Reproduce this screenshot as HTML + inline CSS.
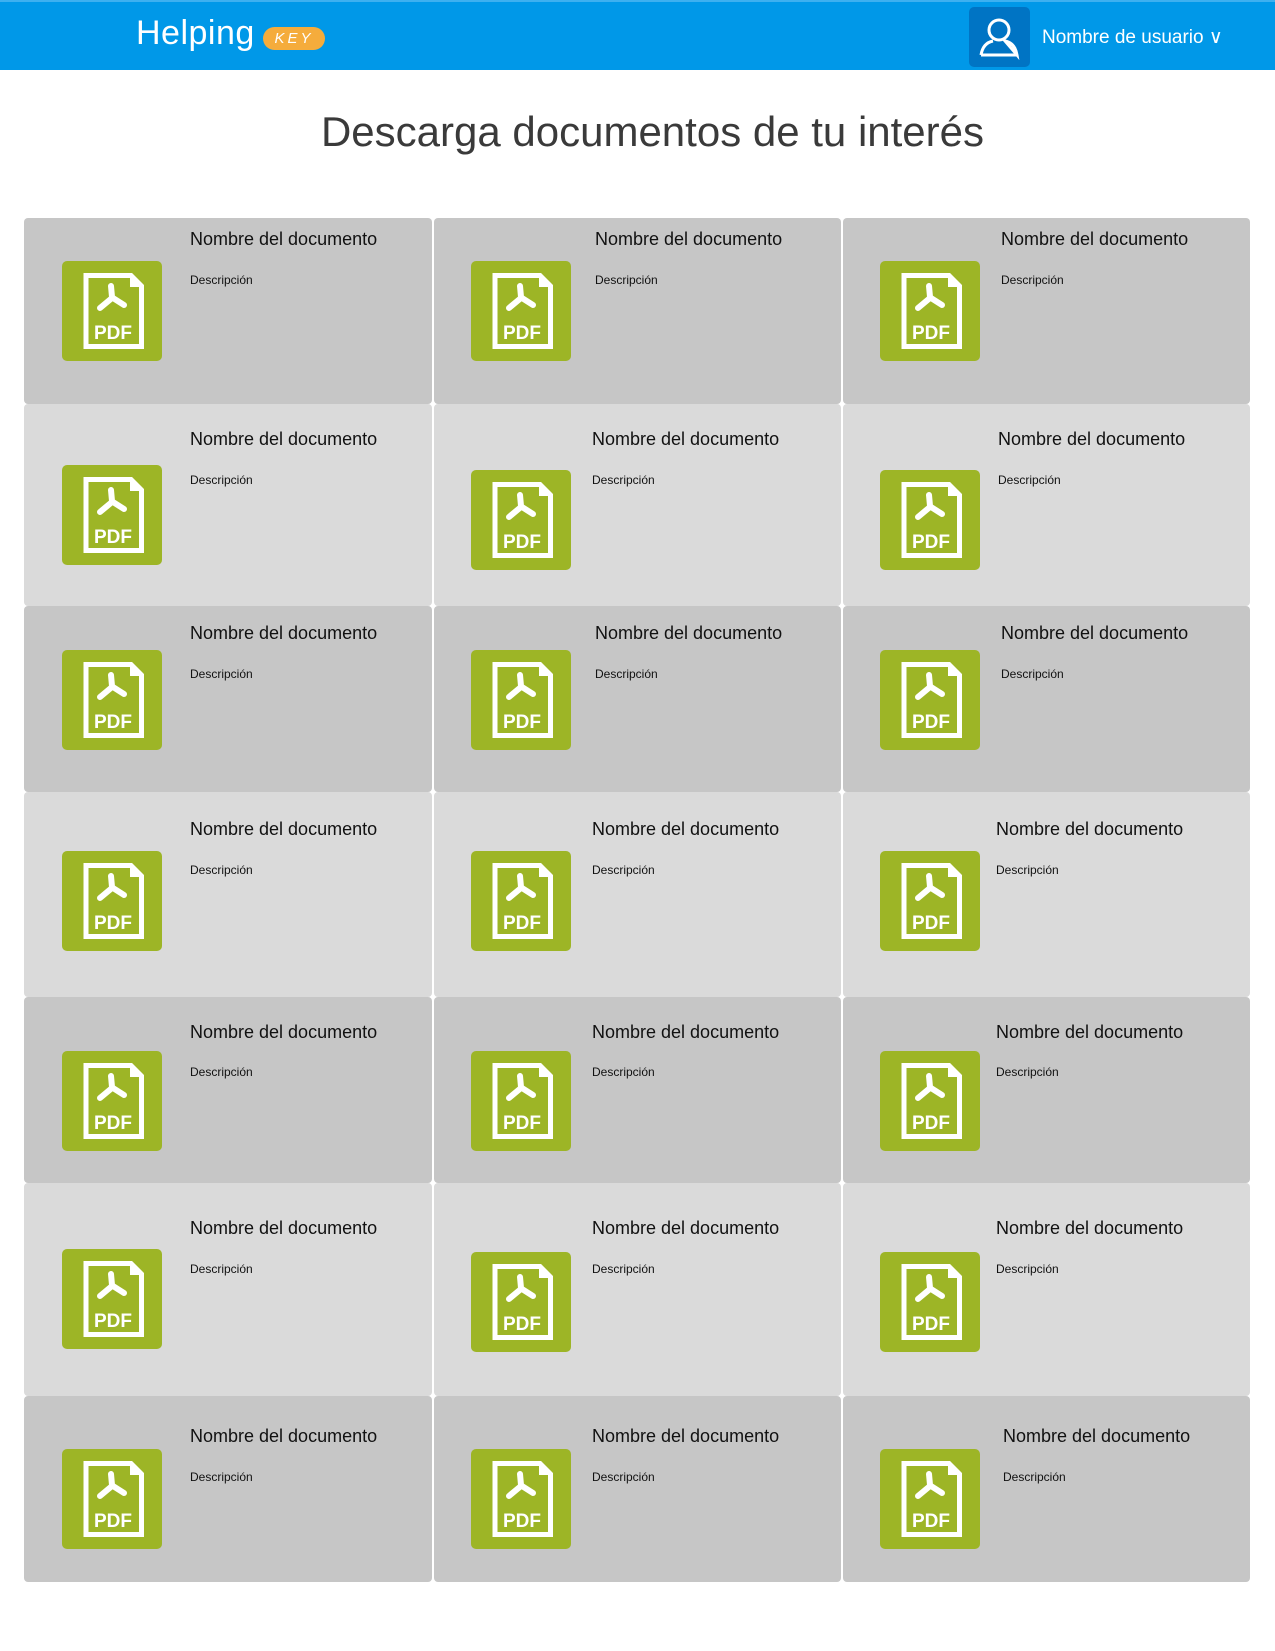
<!DOCTYPE html>
<html><head><meta charset="utf-8"><style>
*{margin:0;padding:0;box-sizing:border-box}
body{width:1275px;height:1651px;background:#fff;position:relative;font-family:"Liberation Sans",sans-serif;overflow:hidden}
.hdr{position:absolute;left:0;top:0;width:1275px;height:70px;background:#0098e8;border-top:2px solid #3db0f0}
.logo{position:absolute;left:136px;top:12px;color:#fff;font-size:34px;font-weight:normal;letter-spacing:0.5px}
.key{position:absolute;left:263px;top:25px;width:62px;height:23px;border-radius:12px;background:#f5ac3c;color:#fff;font-size:15px;text-align:center;line-height:23px;letter-spacing:3px;font-style:italic}
.ubox{position:absolute;left:969px;top:5px;width:61px;height:60px;border-radius:5px;background:#0074c4}
.uname{position:absolute;left:1042px;top:24px;color:#fff;font-size:19px}
h1{position:absolute;left:0;width:1305px;top:108px;text-align:center;font-weight:normal;font-size:42px;color:#3a3a3a}
.c{position:absolute;border-radius:4px}
.d{background:#c6c6c6}.l{background:#dadada}
.n{position:absolute;font-size:18px;color:#111;white-space:nowrap;line-height:20px}
.s{position:absolute;font-size:12px;color:#111;white-space:nowrap;line-height:14px}
svg.i{position:absolute;width:100px;height:100px}
</style></head><body>
<div class="hdr">
 <div class="logo">Helping</div>
 <div class="key">KEY</div>
 <div class="ubox"><svg width="61" height="60" viewBox="0 0 61 60"><circle cx="30" cy="23" r="10" fill="none" stroke="#fff" stroke-width="3"/><path d="M12 48 Q14 36 24 34 M36 34 Q46 36 48 48 Z M12 48 H48" fill="none" stroke="#fff" stroke-width="3"/></svg></div>
 <div class="uname">Nombre de usuario ∨</div>
</div>
<h1>Descarga documentos de tu interés</h1>

<div class="c d" style="left:24px;top:218px;width:408px;height:186px"></div>
<div class="c d" style="left:434px;top:218px;width:407px;height:186px"></div>
<div class="c d" style="left:843px;top:218px;width:407px;height:186px"></div>
<div class="c l" style="left:24px;top:404px;width:408px;height:202px"></div>
<div class="c l" style="left:434px;top:404px;width:407px;height:202px"></div>
<div class="c l" style="left:843px;top:404px;width:407px;height:202px"></div>
<div class="c d" style="left:24px;top:606px;width:408px;height:186px"></div>
<div class="c d" style="left:434px;top:606px;width:407px;height:186px"></div>
<div class="c d" style="left:843px;top:606px;width:407px;height:186px"></div>
<div class="c l" style="left:24px;top:792px;width:408px;height:205px"></div>
<div class="c l" style="left:434px;top:792px;width:407px;height:205px"></div>
<div class="c l" style="left:843px;top:792px;width:407px;height:205px"></div>
<div class="c d" style="left:24px;top:997px;width:408px;height:186px"></div>
<div class="c d" style="left:434px;top:997px;width:407px;height:186px"></div>
<div class="c d" style="left:843px;top:997px;width:407px;height:186px"></div>
<div class="c l" style="left:24px;top:1183px;width:408px;height:213px"></div>
<div class="c l" style="left:434px;top:1183px;width:407px;height:213px"></div>
<div class="c l" style="left:843px;top:1183px;width:407px;height:213px"></div>
<div class="c d" style="left:24px;top:1396px;width:408px;height:186px"></div>
<div class="c d" style="left:434px;top:1396px;width:407px;height:186px"></div>
<div class="c d" style="left:843px;top:1396px;width:407px;height:186px"></div>

<div class="n" style="left:190px;top:229px">Nombre del documento</div><div class="s" style="left:190px;top:273px">Descripción</div>
<div class="n" style="left:595px;top:229px">Nombre del documento</div><div class="s" style="left:595px;top:273px">Descripción</div>
<div class="n" style="left:1001px;top:229px">Nombre del documento</div><div class="s" style="left:1001px;top:273px">Descripción</div>
<div class="n" style="left:190px;top:429px">Nombre del documento</div><div class="s" style="left:190px;top:473px">Descripción</div>
<div class="n" style="left:592px;top:429px">Nombre del documento</div><div class="s" style="left:592px;top:473px">Descripción</div>
<div class="n" style="left:998px;top:429px">Nombre del documento</div><div class="s" style="left:998px;top:473px">Descripción</div>
<div class="n" style="left:190px;top:623px">Nombre del documento</div><div class="s" style="left:190px;top:667px">Descripción</div>
<div class="n" style="left:595px;top:623px">Nombre del documento</div><div class="s" style="left:595px;top:667px">Descripción</div>
<div class="n" style="left:1001px;top:623px">Nombre del documento</div><div class="s" style="left:1001px;top:667px">Descripción</div>
<div class="n" style="left:190px;top:819px">Nombre del documento</div><div class="s" style="left:190px;top:863px">Descripción</div>
<div class="n" style="left:592px;top:819px">Nombre del documento</div><div class="s" style="left:592px;top:863px">Descripción</div>
<div class="n" style="left:996px;top:819px">Nombre del documento</div><div class="s" style="left:996px;top:863px">Descripción</div>
<div class="n" style="left:190px;top:1022px">Nombre del documento</div><div class="s" style="left:190px;top:1065px">Descripción</div>
<div class="n" style="left:592px;top:1022px">Nombre del documento</div><div class="s" style="left:592px;top:1065px">Descripción</div>
<div class="n" style="left:996px;top:1022px">Nombre del documento</div><div class="s" style="left:996px;top:1065px">Descripción</div>
<div class="n" style="left:190px;top:1218px">Nombre del documento</div><div class="s" style="left:190px;top:1262px">Descripción</div>
<div class="n" style="left:592px;top:1218px">Nombre del documento</div><div class="s" style="left:592px;top:1262px">Descripción</div>
<div class="n" style="left:996px;top:1218px">Nombre del documento</div><div class="s" style="left:996px;top:1262px">Descripción</div>
<div class="n" style="left:190px;top:1426px">Nombre del documento</div><div class="s" style="left:190px;top:1470px">Descripción</div>
<div class="n" style="left:592px;top:1426px">Nombre del documento</div><div class="s" style="left:592px;top:1470px">Descripción</div>
<div class="n" style="left:1003px;top:1426px">Nombre del documento</div><div class="s" style="left:1003px;top:1470px">Descripción</div>

<svg class="i" style="left:62px;top:261px" viewBox="0 0 100 100"><rect width="100" height="100" rx="5" fill="#9db526"/><path d="M24 14.5H69L79.5 25V85.5H24Z" fill="none" stroke="#fff" stroke-width="5"/><path d="M68 14V26H80" fill="#fff"/><path d="M49 25L50 36M50 37L38 47M51 37L62 44" stroke="#fff" stroke-width="6" stroke-linecap="round" fill="none"/><text x="51" y="78" text-anchor="middle" font-family="Liberation Sans,sans-serif" font-weight="bold" font-size="19" fill="#fff">PDF</text></svg>
<svg class="i" style="left:471px;top:261px" viewBox="0 0 100 100"><rect width="100" height="100" rx="5" fill="#9db526"/><path d="M24 14.5H69L79.5 25V85.5H24Z" fill="none" stroke="#fff" stroke-width="5"/><path d="M68 14V26H80" fill="#fff"/><path d="M49 25L50 36M50 37L38 47M51 37L62 44" stroke="#fff" stroke-width="6" stroke-linecap="round" fill="none"/><text x="51" y="78" text-anchor="middle" font-family="Liberation Sans,sans-serif" font-weight="bold" font-size="19" fill="#fff">PDF</text></svg>
<svg class="i" style="left:880px;top:261px" viewBox="0 0 100 100"><rect width="100" height="100" rx="5" fill="#9db526"/><path d="M24 14.5H69L79.5 25V85.5H24Z" fill="none" stroke="#fff" stroke-width="5"/><path d="M68 14V26H80" fill="#fff"/><path d="M49 25L50 36M50 37L38 47M51 37L62 44" stroke="#fff" stroke-width="6" stroke-linecap="round" fill="none"/><text x="51" y="78" text-anchor="middle" font-family="Liberation Sans,sans-serif" font-weight="bold" font-size="19" fill="#fff">PDF</text></svg>
<svg class="i" style="left:62px;top:465px" viewBox="0 0 100 100"><rect width="100" height="100" rx="5" fill="#9db526"/><path d="M24 14.5H69L79.5 25V85.5H24Z" fill="none" stroke="#fff" stroke-width="5"/><path d="M68 14V26H80" fill="#fff"/><path d="M49 25L50 36M50 37L38 47M51 37L62 44" stroke="#fff" stroke-width="6" stroke-linecap="round" fill="none"/><text x="51" y="78" text-anchor="middle" font-family="Liberation Sans,sans-serif" font-weight="bold" font-size="19" fill="#fff">PDF</text></svg>
<svg class="i" style="left:471px;top:470px" viewBox="0 0 100 100"><rect width="100" height="100" rx="5" fill="#9db526"/><path d="M24 14.5H69L79.5 25V85.5H24Z" fill="none" stroke="#fff" stroke-width="5"/><path d="M68 14V26H80" fill="#fff"/><path d="M49 25L50 36M50 37L38 47M51 37L62 44" stroke="#fff" stroke-width="6" stroke-linecap="round" fill="none"/><text x="51" y="78" text-anchor="middle" font-family="Liberation Sans,sans-serif" font-weight="bold" font-size="19" fill="#fff">PDF</text></svg>
<svg class="i" style="left:880px;top:470px" viewBox="0 0 100 100"><rect width="100" height="100" rx="5" fill="#9db526"/><path d="M24 14.5H69L79.5 25V85.5H24Z" fill="none" stroke="#fff" stroke-width="5"/><path d="M68 14V26H80" fill="#fff"/><path d="M49 25L50 36M50 37L38 47M51 37L62 44" stroke="#fff" stroke-width="6" stroke-linecap="round" fill="none"/><text x="51" y="78" text-anchor="middle" font-family="Liberation Sans,sans-serif" font-weight="bold" font-size="19" fill="#fff">PDF</text></svg>
<svg class="i" style="left:62px;top:650px" viewBox="0 0 100 100"><rect width="100" height="100" rx="5" fill="#9db526"/><path d="M24 14.5H69L79.5 25V85.5H24Z" fill="none" stroke="#fff" stroke-width="5"/><path d="M68 14V26H80" fill="#fff"/><path d="M49 25L50 36M50 37L38 47M51 37L62 44" stroke="#fff" stroke-width="6" stroke-linecap="round" fill="none"/><text x="51" y="78" text-anchor="middle" font-family="Liberation Sans,sans-serif" font-weight="bold" font-size="19" fill="#fff">PDF</text></svg>
<svg class="i" style="left:471px;top:650px" viewBox="0 0 100 100"><rect width="100" height="100" rx="5" fill="#9db526"/><path d="M24 14.5H69L79.5 25V85.5H24Z" fill="none" stroke="#fff" stroke-width="5"/><path d="M68 14V26H80" fill="#fff"/><path d="M49 25L50 36M50 37L38 47M51 37L62 44" stroke="#fff" stroke-width="6" stroke-linecap="round" fill="none"/><text x="51" y="78" text-anchor="middle" font-family="Liberation Sans,sans-serif" font-weight="bold" font-size="19" fill="#fff">PDF</text></svg>
<svg class="i" style="left:880px;top:650px" viewBox="0 0 100 100"><rect width="100" height="100" rx="5" fill="#9db526"/><path d="M24 14.5H69L79.5 25V85.5H24Z" fill="none" stroke="#fff" stroke-width="5"/><path d="M68 14V26H80" fill="#fff"/><path d="M49 25L50 36M50 37L38 47M51 37L62 44" stroke="#fff" stroke-width="6" stroke-linecap="round" fill="none"/><text x="51" y="78" text-anchor="middle" font-family="Liberation Sans,sans-serif" font-weight="bold" font-size="19" fill="#fff">PDF</text></svg>
<svg class="i" style="left:62px;top:851px" viewBox="0 0 100 100"><rect width="100" height="100" rx="5" fill="#9db526"/><path d="M24 14.5H69L79.5 25V85.5H24Z" fill="none" stroke="#fff" stroke-width="5"/><path d="M68 14V26H80" fill="#fff"/><path d="M49 25L50 36M50 37L38 47M51 37L62 44" stroke="#fff" stroke-width="6" stroke-linecap="round" fill="none"/><text x="51" y="78" text-anchor="middle" font-family="Liberation Sans,sans-serif" font-weight="bold" font-size="19" fill="#fff">PDF</text></svg>
<svg class="i" style="left:471px;top:851px" viewBox="0 0 100 100"><rect width="100" height="100" rx="5" fill="#9db526"/><path d="M24 14.5H69L79.5 25V85.5H24Z" fill="none" stroke="#fff" stroke-width="5"/><path d="M68 14V26H80" fill="#fff"/><path d="M49 25L50 36M50 37L38 47M51 37L62 44" stroke="#fff" stroke-width="6" stroke-linecap="round" fill="none"/><text x="51" y="78" text-anchor="middle" font-family="Liberation Sans,sans-serif" font-weight="bold" font-size="19" fill="#fff">PDF</text></svg>
<svg class="i" style="left:880px;top:851px" viewBox="0 0 100 100"><rect width="100" height="100" rx="5" fill="#9db526"/><path d="M24 14.5H69L79.5 25V85.5H24Z" fill="none" stroke="#fff" stroke-width="5"/><path d="M68 14V26H80" fill="#fff"/><path d="M49 25L50 36M50 37L38 47M51 37L62 44" stroke="#fff" stroke-width="6" stroke-linecap="round" fill="none"/><text x="51" y="78" text-anchor="middle" font-family="Liberation Sans,sans-serif" font-weight="bold" font-size="19" fill="#fff">PDF</text></svg>
<svg class="i" style="left:62px;top:1051px" viewBox="0 0 100 100"><rect width="100" height="100" rx="5" fill="#9db526"/><path d="M24 14.5H69L79.5 25V85.5H24Z" fill="none" stroke="#fff" stroke-width="5"/><path d="M68 14V26H80" fill="#fff"/><path d="M49 25L50 36M50 37L38 47M51 37L62 44" stroke="#fff" stroke-width="6" stroke-linecap="round" fill="none"/><text x="51" y="78" text-anchor="middle" font-family="Liberation Sans,sans-serif" font-weight="bold" font-size="19" fill="#fff">PDF</text></svg>
<svg class="i" style="left:471px;top:1051px" viewBox="0 0 100 100"><rect width="100" height="100" rx="5" fill="#9db526"/><path d="M24 14.5H69L79.5 25V85.5H24Z" fill="none" stroke="#fff" stroke-width="5"/><path d="M68 14V26H80" fill="#fff"/><path d="M49 25L50 36M50 37L38 47M51 37L62 44" stroke="#fff" stroke-width="6" stroke-linecap="round" fill="none"/><text x="51" y="78" text-anchor="middle" font-family="Liberation Sans,sans-serif" font-weight="bold" font-size="19" fill="#fff">PDF</text></svg>
<svg class="i" style="left:880px;top:1051px" viewBox="0 0 100 100"><rect width="100" height="100" rx="5" fill="#9db526"/><path d="M24 14.5H69L79.5 25V85.5H24Z" fill="none" stroke="#fff" stroke-width="5"/><path d="M68 14V26H80" fill="#fff"/><path d="M49 25L50 36M50 37L38 47M51 37L62 44" stroke="#fff" stroke-width="6" stroke-linecap="round" fill="none"/><text x="51" y="78" text-anchor="middle" font-family="Liberation Sans,sans-serif" font-weight="bold" font-size="19" fill="#fff">PDF</text></svg>
<svg class="i" style="left:62px;top:1249px" viewBox="0 0 100 100"><rect width="100" height="100" rx="5" fill="#9db526"/><path d="M24 14.5H69L79.5 25V85.5H24Z" fill="none" stroke="#fff" stroke-width="5"/><path d="M68 14V26H80" fill="#fff"/><path d="M49 25L50 36M50 37L38 47M51 37L62 44" stroke="#fff" stroke-width="6" stroke-linecap="round" fill="none"/><text x="51" y="78" text-anchor="middle" font-family="Liberation Sans,sans-serif" font-weight="bold" font-size="19" fill="#fff">PDF</text></svg>
<svg class="i" style="left:471px;top:1252px" viewBox="0 0 100 100"><rect width="100" height="100" rx="5" fill="#9db526"/><path d="M24 14.5H69L79.5 25V85.5H24Z" fill="none" stroke="#fff" stroke-width="5"/><path d="M68 14V26H80" fill="#fff"/><path d="M49 25L50 36M50 37L38 47M51 37L62 44" stroke="#fff" stroke-width="6" stroke-linecap="round" fill="none"/><text x="51" y="78" text-anchor="middle" font-family="Liberation Sans,sans-serif" font-weight="bold" font-size="19" fill="#fff">PDF</text></svg>
<svg class="i" style="left:880px;top:1252px" viewBox="0 0 100 100"><rect width="100" height="100" rx="5" fill="#9db526"/><path d="M24 14.5H69L79.5 25V85.5H24Z" fill="none" stroke="#fff" stroke-width="5"/><path d="M68 14V26H80" fill="#fff"/><path d="M49 25L50 36M50 37L38 47M51 37L62 44" stroke="#fff" stroke-width="6" stroke-linecap="round" fill="none"/><text x="51" y="78" text-anchor="middle" font-family="Liberation Sans,sans-serif" font-weight="bold" font-size="19" fill="#fff">PDF</text></svg>
<svg class="i" style="left:62px;top:1449px" viewBox="0 0 100 100"><rect width="100" height="100" rx="5" fill="#9db526"/><path d="M24 14.5H69L79.5 25V85.5H24Z" fill="none" stroke="#fff" stroke-width="5"/><path d="M68 14V26H80" fill="#fff"/><path d="M49 25L50 36M50 37L38 47M51 37L62 44" stroke="#fff" stroke-width="6" stroke-linecap="round" fill="none"/><text x="51" y="78" text-anchor="middle" font-family="Liberation Sans,sans-serif" font-weight="bold" font-size="19" fill="#fff">PDF</text></svg>
<svg class="i" style="left:471px;top:1449px" viewBox="0 0 100 100"><rect width="100" height="100" rx="5" fill="#9db526"/><path d="M24 14.5H69L79.5 25V85.5H24Z" fill="none" stroke="#fff" stroke-width="5"/><path d="M68 14V26H80" fill="#fff"/><path d="M49 25L50 36M50 37L38 47M51 37L62 44" stroke="#fff" stroke-width="6" stroke-linecap="round" fill="none"/><text x="51" y="78" text-anchor="middle" font-family="Liberation Sans,sans-serif" font-weight="bold" font-size="19" fill="#fff">PDF</text></svg>
<svg class="i" style="left:880px;top:1449px" viewBox="0 0 100 100"><rect width="100" height="100" rx="5" fill="#9db526"/><path d="M24 14.5H69L79.5 25V85.5H24Z" fill="none" stroke="#fff" stroke-width="5"/><path d="M68 14V26H80" fill="#fff"/><path d="M49 25L50 36M50 37L38 47M51 37L62 44" stroke="#fff" stroke-width="6" stroke-linecap="round" fill="none"/><text x="51" y="78" text-anchor="middle" font-family="Liberation Sans,sans-serif" font-weight="bold" font-size="19" fill="#fff">PDF</text></svg>
</body></html>
